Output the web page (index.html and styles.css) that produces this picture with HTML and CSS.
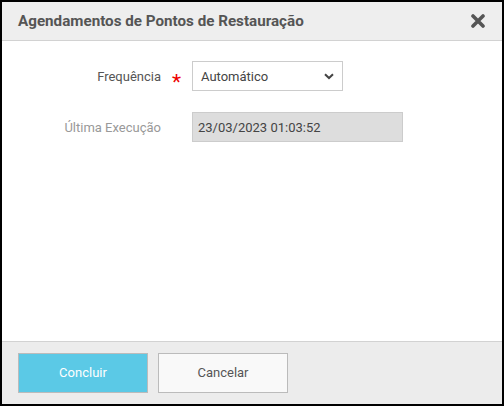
FILE: index.html
```html
<!DOCTYPE html>
<html lang="pt">
<head>
<meta charset="utf-8">
<link rel="stylesheet" href="styles.css">
</head>
<body>
<div class="dialog">
  <div class="header">
    <span class="title">Agendamentos de Pontos de Restauração</span>
    <span class="close"><svg width="14" height="14" viewBox="0 0 14 14"><path d="M2 2 L12 12 M12 2 L2 12" stroke="#555" stroke-width="3.6" stroke-linecap="round"/></svg></span>
  </div>
  <div class="body">
    <div class="row">
      <label class="label">Frequência</label>
      <span class="req">*</span>
      <div class="select">
        <span>Automático</span>
        <svg width="10" height="7" viewBox="0 0 10 7"><path d="M1 1.2 L5 5 L9 1.2" fill="none" stroke="#444" stroke-width="2"/></svg>
      </div>
    </div>
    <div class="row row2">
      <label class="label muted">Última Execução</label>
      <span class="req"></span>
      <div class="input">23/03/2023 01:03:52</div>
    </div>
  </div>
  <div class="footer">
    <button class="btn primary">Concluir</button>
    <button class="btn">Cancelar</button>
  </div>
</div>
</body>
</html>
```
FILE: styles.css
```css
html, body { margin: 0; padding: 0; }
body {
  width: 504px; height: 406px;
  font-family: Roboto, "Liberation Sans", sans-serif;
  background: #000;
}
.dialog {
  box-sizing: border-box;
  width: 504px; height: 406px;
  border: 2px solid #000;
  background: #fff;
  display: flex; flex-direction: column;
}
.header {
  height: 38px;
  background: #eee;
  border-bottom: 1px solid #d2d2d2;
  display: flex; align-items: center; justify-content: space-between;
  padding: 0 17px 0 16px;
}
.title { font-size: 15.2px; font-weight: bold; color: #555; }
.close { display: flex; width: 14px; height: 14px; }
.body { flex: 1; padding-top: 20px; }
.row { display: flex; align-items: center; height: 30px; }
.row2 { margin-top: 21px; }
.label {
  width: 159px; text-align: right;
  font-size: 13px; color: #555;
}
.label.muted { color: #999; }
.req {
  width: 31px; text-align: center; color: #e00;
  font-size: 21px; line-height: 1; padding-top: 11px; box-sizing: border-box; height: 30px;
}
.select {
  box-sizing: border-box; width: 151px; height: 30px;
  border: 1px solid #ccc; background: #fff;
  display: flex; align-items: center; justify-content: space-between;
  padding: 0 8px 0 8px;
  font-size: 13px; color: #444;
}
.input {
  box-sizing: border-box; width: 211px; height: 30px;
  border: 1px solid #ccc; background: #ddd;
  display: flex; align-items: center;
  padding: 0 5px; font-size: 13px; color: #444;
}
.footer {
  height: 62px;
  background: #ececec;
  border-top: 1px solid #d2d2d2;
  display: flex; align-items: center; gap: 10px;
  padding: 0 16px;
}
.btn {
  width: 130px; height: 40px; margin-top: -1px;
  border: 1px solid #bbb; background: #f9f9f9;
  font-family: Roboto, "Liberation Sans", sans-serif;
  font-size: 13px; color: #555;
}
.btn.primary { background: #5bc9e6; color: #fff; }
```
